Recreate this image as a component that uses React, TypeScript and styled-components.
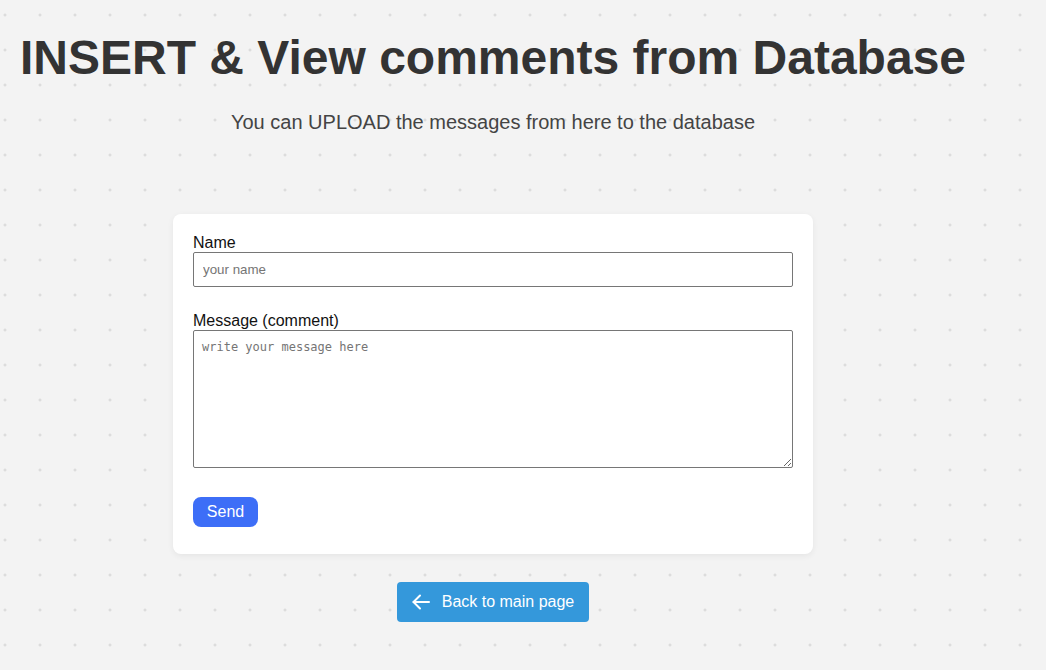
import React from "react";
import styled, { createGlobalStyle } from "styled-components";

const GlobalStyle = createGlobalStyle`
  html, body {
    margin: 0;
    padding: 0;
    background-color: #f3f3f3;
    background-image: radial-gradient(circle, #d4d4d4 1px, transparent 1.2px);
    background-size: 35px 35px;
    background-position: -12.5px -2.5px;
    min-height: 670px;
    font-family: "Liberation Sans", Arial, sans-serif;
    color: #333;
  }
`;

const Page = styled.main`
  width: 986px;
  display: flex;
  flex-direction: column;
  align-items: center;
`;

const Title = styled.h1`
  margin: 30px 0 0;
  font-size: 48px;
  font-weight: 700;
  line-height: 56px;
  color: #333;
`;

const Subtitle = styled.p`
  margin: 24px 0 0;
  font-size: 20px;
  line-height: 24px;
  color: #444;
`;

const Card = styled.form`
  margin-top: 80px;
  width: 640px;
  box-sizing: border-box;
  background: #fff;
  border-radius: 8px;
  box-shadow: 0 2px 6px rgba(0, 0, 0, 0.06);
  padding: 20px 20px 27px;
  display: flex;
  flex-direction: column;
`;

const Label = styled.label<{ $gap?: number }>`
  display: block;
  font-size: 16px;
  line-height: 18px;
  color: #111;
  margin-top: ${(p) => p.$gap ?? 0}px;
`;

const TextInput = styled.input`
  display: block;
  box-sizing: border-box;
  width: 600px;
  height: 35px;
  margin: 0;
  padding: 0 9px;
  border: 1px solid #767676;
  border-radius: 2px;
  font-family: "Liberation Sans", Arial, sans-serif;
  font-size: 13.333px;
  &::placeholder {
    color: #757575;
  }
`;

const TextArea = styled.textarea`
  display: block;
  box-sizing: border-box;
  width: 600px;
  height: 138px;
  margin: 0;
  padding: 9px 8px;
  border: 1px solid #767676;
  border-radius: 2px;
  font-family: "DejaVu Sans Mono", monospace;
  font-size: 12px;
  line-height: 15px;
  &::placeholder {
    color: #757575;
  }
`;

const SendButton = styled.button`
  align-self: flex-start;
  margin-top: 29px;
  width: 65px;
  height: 30px;
  border: none;
  border-radius: 8px;
  background: #3d6ef7;
  color: #fff;
  font-family: "Liberation Sans", Arial, sans-serif;
  font-size: 16px;
  padding: 0;
  cursor: pointer;
`;

const BackButton = styled.a`
  margin-top: 28px;
  width: 192px;
  height: 40px;
  box-sizing: border-box;
  display: flex;
  align-items: center;
  justify-content: center;
  gap: 12px;
  background: #3498db;
  color: #fff;
  border-radius: 4px;
  font-size: 16px;
  text-decoration: none;
  cursor: pointer;
`;

const Arrow = () => (
  <svg width="18" height="16" viewBox="0 0 18 16" fill="none" stroke="#fff" strokeWidth="2" strokeLinecap="round" strokeLinejoin="round">
    <path d="M17 8H1.5" />
    <path d="M8 1.5L1.5 8L8 14.5" />
  </svg>
);

export default function App() {
  return (
    <>
      <GlobalStyle />
      <Page>
        <Title>INSERT &amp; View comments from Database</Title>
        <Subtitle>You can UPLOAD the messages from here to the database</Subtitle>
        <Card onSubmit={(e) => e.preventDefault()}>
          <Label htmlFor="name">Name</Label>
          <TextInput id="name" type="text" placeholder="your name" />
          <Label htmlFor="msg" $gap={25}>Message (comment)</Label>
          <TextArea id="msg" placeholder="write your message here" />
          <SendButton type="submit">Send</SendButton>
        </Card>
        <BackButton>
          <Arrow />
          Back to main page
        </BackButton>
      </Page>
    </>
  );
}
